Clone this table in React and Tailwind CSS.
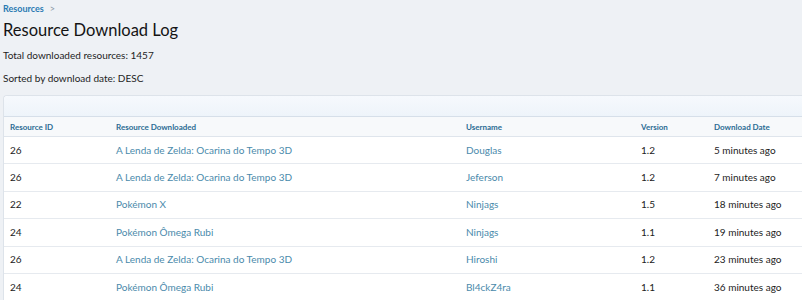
import React from 'react'

const rows = [
  { id: 26, title: 'A Lenda de Zelda: Ocarina do Tempo 3D', user: 'Douglas', version: '1.2', date: '5 minutes ago' },
  { id: 26, title: 'A Lenda de Zelda: Ocarina do Tempo 3D', user: 'Jeferson', version: '1.2', date: '7 minutes ago' },
  { id: 22, title: 'Pokémon X', user: 'Ninjags', version: '1.5', date: '18 minutes ago' },
  { id: 24, title: 'Pokémon Ômega Rubi', user: 'Ninjags', version: '1.1', date: '19 minutes ago' },
  { id: 26, title: 'A Lenda de Zelda: Ocarina do Tempo 3D', user: 'Hiroshi', version: '1.2', date: '23 minutes ago' },
  { id: 24, title: 'Pokémon Ômega Rubi', user: 'Bl4ckZ4ra', version: '1.1', date: '36 minutes ago' },
]

const cols = 'grid grid-cols-[106px_350px_175px_73px_1fr]'

const App = () => {
  return (
    <div className="h-[300px] w-[802px] overflow-hidden bg-[#eef1f5] pl-[3px] text-[#222] font-['Lato','Liberation_Sans',sans-serif]">
      <div className="flex items-center gap-[6px] text-[9px] leading-[18px] font-bold text-[#2a7ab3]">
        <span>Resources</span>
        <span className="text-[9px] font-normal text-[#8a96a3]">&gt;</span>
      </div>
      <h1 className="mt-[2px] text-[16.5px] leading-[20px] text-[#141414]">Resource Download Log</h1>
      <p className="mt-[8px] text-[10px] leading-[14px] text-[#1d1d1d]">Total downloaded resources: 1457</p>
      <p className="mt-[9px] text-[10px] leading-[14px] text-[#1d1d1d]">Sorted by download date: DESC</p>

      <div className="mt-[10px] rounded-tl-[4px] border border-r-0 border-b-0 border-[#dde3ea] bg-white">
        <div className="h-[21px] rounded-tl-[4px] bg-gradient-to-b from-[#f6f9fd] to-[#eef4fa] border-b border-[#d6dfe9]" />
        <div className={`${cols} h-[20px] items-center border-b border-[#dfe5ec] bg-[#f7f9fb] px-[6px] text-[8px] font-bold text-[#2b6c94]`}>
          <span>Resource ID</span>
          <span>Resource Downloaded</span>
          <span>Username</span>
          <span>Version</span>
          <span>Download Date</span>
        </div>
        {rows.map((r, i) => (
          <div key={i} className={`${cols} h-[27.4px] items-center border-b border-[#e6eaef] px-[6px] text-[10px] text-[#222]`}>
            <span>{r.id}</span>
            <span className="text-[#4a8aab]">{r.title}</span>
            <span className="text-[#4a8aab]">{r.user}</span>
            <span>{r.version}</span>
            <span>{r.date}</span>
          </div>
        ))}
      </div>
    </div>
  )
}

export default App
